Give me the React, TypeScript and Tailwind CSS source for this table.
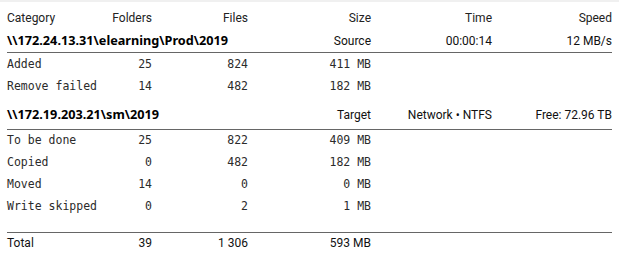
import React from "react";

const sans = { fontFamily: "Roboto, 'Noto Sans', sans-serif" };
const bold = { fontFamily: "'Noto Sans', Roboto, sans-serif" };
const mono = { fontFamily: "'DejaVu Sans Mono', 'Liberation Mono', monospace" };

const cols = "grid grid-cols-[90px_55px_96px_123px_121px_120px]";

function DataRow({ label, folders, files, size }: { label: string; folders: string; files: string; size: string }) {
  return (
    <div className={`${cols} h-[22px] items-center text-[11.5px] text-[#2b2b2b]`} style={mono}>
      <div className="whitespace-nowrap">{label}</div>
      <div className="text-right">{folders}</div>
      <div className="text-right">{files}</div>
      <div className="text-right">{size}</div>
      <div />
      <div />
    </div>
  );
}

function PathRow({ path, a, b, c, h, pt }: { path: string; a: string; b: string; c: string; h: string; pt: string }) {
  return (
    <div className={`${cols} ${h} ${pt} items-center text-[12px] text-[#111]`} style={sans}>
      <div className="col-span-3 whitespace-nowrap font-bold text-black text-[12.7px]" style={bold}>{path}</div>
      <div className="text-right">{a}</div>
      <div className="text-right">{b}</div>
      <div className="text-right">{c}</div>
    </div>
  );
}

export default function App() {
  return (
    <div className="w-[619px] h-[270px] bg-white overflow-hidden">
      <div className="h-[2px] bg-[#f0f0f0]" />
      <div className="pl-[7px] pt-[5px]">
        <div className={`${cols} h-[22px] items-center text-[12px] text-[#222]`} style={sans}>
          <div>Category</div>
          <div className="text-right">Folders</div>
          <div className="text-right">Files</div>
          <div className="text-right">Size</div>
          <div className="text-right">Time</div>
          <div className="text-right">Speed</div>
        </div>
        <PathRow path="\\172.24.13.31\elearning\Prod\2019" a="Source" b="00:00:14" c="12 MB/s" h="h-[23px]" pt="" />
        <div className="w-[605px] h-px bg-[#666]" />
        <div className="pt-[1px]">
          <DataRow label="Added" folders="25" files="824" size="411 MB" />
          <DataRow label="Remove failed" folders="14" files="482" size="182 MB" />
        </div>
        <PathRow path="\\172.19.203.21\sm\2019" a="Target" b="Network • NTFS" c="Free: 72.96 TB" h="h-[31px]" pt="pt-[3px]" />
        <div className="w-[605px] h-px bg-[#666]" />
        <DataRow label="To be done" folders="25" files="822" size="409 MB" />
        <DataRow label="Copied" folders="0" files="482" size="182 MB" />
        <DataRow label="Moved" folders="14" files="0" size="0 MB" />
        <DataRow label="Write skipped" folders="0" files="2" size="1 MB" />
        <div className="h-[14px]" />
        <div className="w-[605px] h-px bg-[#666]" />
        <div className={`${cols} h-[19px] items-center text-[12px] text-[#111]`} style={sans}>
          <div>Total</div>
          <div className="text-right">39</div>
          <div className="text-right">1 306</div>
          <div className="text-right">593 MB</div>
          <div />
          <div />
        </div>
      </div>
    </div>
  );
}
